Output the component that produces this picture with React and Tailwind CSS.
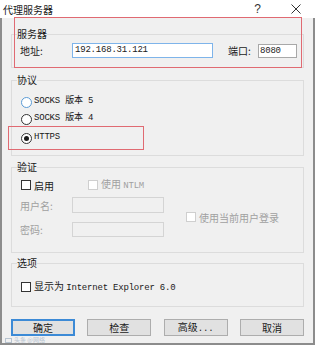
import React from 'react';

const cjk = "font-['Microsoft_YaHei','Noto_Sans_CJK_SC',sans-serif]";
const mono = "font-['Liberation_Mono','Noto_Sans_CJK_SC',monospace] text-[9px] tracking-[-0.2px]";

function Group({ title, className, children }) {
  return (
    <fieldset className={`border border-[#dcdcdc] mx-[9px] ${className}`}>
      <legend className={`ml-[5px] text-[10px] leading-[16px] text-[#1a1a1a] ${cjk}`}>{title}</legend>
      {children}
    </fieldset>
  );
}

function Radio({ checked, focus, label }) {
  return (
    <div className="flex items-center gap-[2px] h-[14px]">
      <span
        className={`w-[11px] h-[11px] rounded-full border bg-white flex items-center justify-center ${
          focus ? 'border-[#5b9bd5]' : 'border-[#333]'
        }`}
      >
        {checked && <span className="w-[5px] h-[5px] rounded-full bg-[#1a1a1a]" />}
      </span>
      <span className={`text-[#1a1a1a] ${mono}`}>{label}</span>
    </div>
  );
}

function Check({ disabled, children }) {
  return (
    <div className="flex items-center gap-[3px] h-[12px]">
      <span
        className={`w-[10px] h-[10px] border bg-white ${disabled ? 'border-[#cfcfcf]' : 'border-[#333]'}`}
      />
      <span className={`text-[10px] ${disabled ? 'text-[#a0a0a0]' : 'text-[#1a1a1a]'} ${cjk}`}>
        {children}
      </span>
    </div>
  );
}

function Btn({ primary, children }) {
  return (
    <button
      className={`w-[64px] h-[17px] bg-[#e1e1e1] text-[10px] leading-none text-[#1a1a1a] ${cjk} ${
        primary ? 'border-2 border-[#3c8ad6]' : 'border border-[#adadad]'
      }`}
    >
      {children}
    </button>
  );
}

export default function App() {
  return (
    <div className="relative w-[315px] h-[345px] bg-[#f0f0f0] overflow-hidden">
      {/* title bar */}
      <div className="h-[18px] bg-white flex items-center pl-[3px] pr-[14px]">
        <span className={`text-[10px] text-[#1a1a1a] ${cjk}`}>代理服务器</span>
        <span className="ml-auto mr-[30px] text-[12px] text-[#333] font-['Liberation_Sans',sans-serif]">?</span>
        <svg width="10" height="10" viewBox="0 0 10 10" className="text-[#333]">
          <path d="M0.5 0.5 L9.5 9.5 M9.5 0.5 L0.5 9.5" stroke="currentColor" strokeWidth="1" />
        </svg>
      </div>

      <div className="h-[327px] border-x-2 border-b-2 border-[#8c8c8c] flex flex-col">
        <Group title="服务器" className="mt-[8px] h-[42px]">
          <div className="flex items-center h-[15px] mt-[1px] pl-[8px]">
            <span className={`w-[52px] text-[10px] text-[#1a1a1a] ${cjk}`}>地址:</span>
            <div className={`w-[141px] h-[15px] bg-white border border-[#7eb4ea] pl-[2px] leading-[13px] text-[#1a1a1a] ${mono}`}>
              192.168.31.121
            </div>
            <span className={`ml-[15px] w-[30px] text-[10px] text-[#1a1a1a] ${cjk}`}>端口:</span>
            <div className={`w-[39px] h-[14px] bg-white border border-[#a8a8a8] pl-[1px] leading-[12px] text-[#1a1a1a] ${mono}`}>
              8080
            </div>
          </div>
        </Group>

        <Group title="协议" className="mt-[4px] h-[84px]">
          <div className="flex flex-col pl-[9px] pt-[7px]">
            <Radio focus label="SOCKS 版本 5" />
            <div className="h-[3px]" />
            <Radio label="SOCKS 版本 4" />
            <div className="h-[5px]" />
            <Radio checked label="HTTPS" />
          </div>
        </Group>

        <Group title="验证" className="mt-[3px] h-[94px]">
          <div className="flex items-center pl-[9px] pt-[4px]">
            <div className="w-[67px]">
              <Check>启用</Check>
            </div>
            <Check disabled>
              使用 <span className={mono}>NTLM</span>
            </Check>
          </div>
          <div className="flex items-center pl-[8px] mt-[6px]">
            <div className="flex flex-col gap-[9px]">
              <div className="flex items-center">
                <span className={`w-[52px] text-[10px] text-[#a0a0a0] ${cjk}`}>用户名:</span>
                <div className="w-[92px] h-[16px] border border-[#d4d4d4] bg-[#f0f0f0]" />
              </div>
              <div className="flex items-center">
                <span className={`w-[52px] text-[10px] text-[#a0a0a0] ${cjk}`}>密码:</span>
                <div className="w-[92px] h-[15px] border border-[#d4d4d4] bg-[#f0f0f0]" />
              </div>
            </div>
            <div className="ml-[22px]">
              <Check disabled>使用当前用户登录</Check>
            </div>
          </div>
        </Group>

        <Group title="选项" className="mt-[2px] h-[52px]">
          <div className="pl-[9px] pt-[10px]">
            <Check>
              显示为 <span className={mono}>Internet Explorer 6.0</span>
            </Check>
          </div>
        </Group>

        <div className="flex justify-between mx-[9px] mt-[12px]">
          <Btn primary>确定</Btn>
          <Btn>检查</Btn>
          <Btn>
            高级<span className={mono}>...</span>
          </Btn>
          <Btn>取消</Btn>
        </div>
      </div>

      {/* annotations */}
      <div className="absolute left-[14px] top-[17px] w-[288px] h-[51px] border border-[#e06a72]" />
      <div className="absolute left-[8px] top-[126px] w-[136px] h-[24px] border border-[#e06a72]" />
      <div className={`absolute left-[5px] top-[337px] flex items-center gap-[2px] text-[6px] leading-none text-[#b8c4d0] ${cjk}`}>
        <span className="w-[7px] h-[5px] border border-[#b8c4d0]" />
        <span>头条 @网络</span>
      </div>
    </div>
  );
}
